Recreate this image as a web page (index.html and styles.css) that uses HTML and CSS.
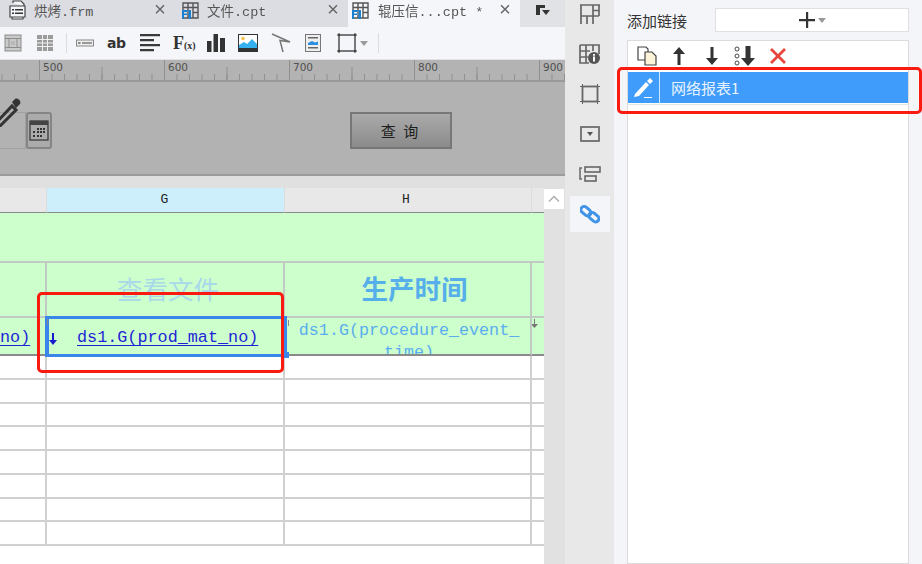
FILE: index.html

```html
<!DOCTYPE html>
<html lang="zh-CN">

<head>
    <meta charset="UTF-8">
    <title>报表设计器</title>
    <link rel="stylesheet" href="styles.css">
</head>

<body>
    <div class="app">
        <!-- Designer -->
        <main class="designer">
            <div class="tabs">
                <div class="tab tab-first">
                    <svg class="tab-icon" width="20" height="20" viewBox="0 0 20 20"><path d="M5 3V1h8l3 3v2M2 6h15v11H2zM4 17v2h11v-2" fill="#f5f6f9" stroke="#444" stroke-width="1.2"/><path d="M4 9h2v1.5H4zM7 9h8v1.5H7zM4 12.500h2V14H4zM7 12.500h8V14H7z" fill="#333"/></svg>
                    <span class="tab-name">烘烤.frm</span>
                    <span class="tab-close">×</span>
                </div>
                <div class="tab tab-second">
                    <svg class="tab-icon" width="17" height="17" viewBox="0 0 17 17"><path d="M1 1h15v15H1zM1 5.500h15M6 1v15M11 1v15M11 10.500h5" fill="none" stroke="#555" stroke-width="1.400"/><path d="M0 8h5.500v2H2v1.500h3V13H2v4H0zM6.500 8H9v9H6.500z" fill="#1b7fd0"/></svg>
                    <span class="tab-name">文件.cpt</span>
                    <span class="tab-close">×</span>
                </div>
                <div class="tab tab-active">
                    <svg class="tab-icon" width="17" height="17" viewBox="0 0 17 17"><path d="M1 1h15v15H1zM1 5.500h15M6 1v15M11 1v15M11 10.500h5" fill="none" stroke="#555" stroke-width="1.400"/><path d="M0 8h5.500v2H2v1.500h3V13H2v4H0zM6.500 8H9v9H6.500z" fill="#1b7fd0"/></svg>
                    <span class="tab-name">辊压信...cpt *</span>
                    <span class="tab-close">×</span>
                </div>
                <div class="tab-menu">
                    <svg width="16" height="14" viewBox="0 0 16 14"><path d="M1 1h9v3H5v7H1z" fill="#333"/><path d="M7 6h8l-4 5z" fill="#333"/></svg>
                </div>
            </div>

            <div class="toolbar">
                <svg class="tool tool-wide" width="18" height="18" viewBox="0 0 18 18"><rect x="1" y="1" width="16" height="16" fill="#c9c9c9" stroke="#8c8c8c"/><path d="M1 4.500h16M1 13.500h16M5 4.500v9M13 4.500v9" stroke="#8c8c8c" fill="none"/><rect x="7" y="7" width="4" height="4" fill="#b8b8b8"/></svg>
                <svg class="tool" width="18" height="18" viewBox="0 0 18 18"><rect x="1" y="1" width="16" height="16" fill="#9b9b9b"/><path d="M1 5.500h16M1 9h16M1 12.500h16M6.500 1v16M11.500 1v16" stroke="#f0f0f0" fill="none"/></svg>
                <span class="tool-sep"></span>
                <svg class="tool" width="18" height="18" viewBox="0 0 18 18"><rect x="0.500" y="6" width="17" height="6" fill="#eee" stroke="#888"/><rect x="2" y="8" width="2.500" height="2" fill="#888"/><rect x="6" y="8" width="10" height="2" fill="#999"/></svg>
                <span class="tool tool-text">ab</span>
                <svg class="tool" width="20" height="18" viewBox="0 0 20 18"><path d="M0 0h20v2.200H0zM0 5h14v2.200H0zM0 10h20v2.200H0zM0 15h14v2.200H0z" fill="#3a3a3a"/></svg>
                <span class="tool tool-fx">F<small>(x)</small></span>
                <svg class="tool" width="18" height="18" viewBox="0 0 18 18"><path d="M0 7h4.500v11H0zM6.500 0H11v18H6.500zM13 4h5v14h-5z" fill="#333"/></svg>
                <svg class="tool" width="20" height="18" viewBox="0 0 20 18"><rect x="0.500" y="0.500" width="19" height="17" fill="#fff" stroke="#333"/><path d="M1 14v-3l5-3 3 2 5-5 5 5v4z" fill="#35b0ee"/><circle cx="5" cy="4.500" r="1.800" fill="#f4c04a"/><rect x="1" y="14" width="18" height="3.500" fill="#333"/></svg>
                <svg class="tool tool-wide" width="20" height="20" viewBox="0 0 20 20"><path d="M1 1l18 8-10-1.500L12 19" fill="none" stroke="#777" stroke-width="1.500"/></svg>
                <svg class="tool tool-last" width="16" height="18" viewBox="0 0 16 18"><rect x="0.500" y="0.500" width="15" height="17" fill="#eee" stroke="#777"/><path d="M3 3h10v1.500H3zM3 13h10v1.500H3z" fill="#666"/><path d="M3 11V9l4-2 3 1.500 3-1V11z" fill="#2a8fe0"/></svg>
                <span class="tool tool-border">
                    <svg width="20" height="20" viewBox="0 0 20 20"><rect x="2" y="2" width="16" height="16" fill="none" stroke="#444" stroke-width="1.400"/><path d="M0 2h3M17 2h3M0 18h3M17 18h3M2 0v3M18 0v3M2 17v3M18 17v3" stroke="#333"/></svg>
                    <i class="caret"></i>
                </span>
                <span class="tool-sep"></span>
            </div>

            <div class="ruler">
                <span class="ruler-mark">500</span>
                <span class="ruler-mark">600</span>
                <span class="ruler-mark">700</span>
                <span class="ruler-mark">800</span>
                <span class="ruler-mark">900</span>
            </div>

            <div class="form-area">
                <div class="date-field">
                    <div class="date-input">
                        <svg class="date-pencil" width="24" height="30" viewBox="0 0 24 30"><path d="M-2 27L15 9l4 4L2 30z" fill="none" stroke="#333" stroke-width="3"/><path d="M15 5l3-3c2-1 4 0 5 2s0 3-1 4l-3 3z" fill="#333"/></svg>
                    </div>
                    <div class="date-button">
                        <svg width="20" height="21" viewBox="0 0 20 21"><rect x="1" y="1" width="18" height="19" fill="none" stroke="#333" stroke-width="1.200"/><path d="M1 1h18v4H1z" fill="#444"/><path d="M8 8h2v2H8zM11 8h2v2h-2zM14 8h2v2h-2zM4 11h2v2H4zM8 11h2v2H8zM11 11h2v2h-2zM14 11h2v2h-2zM4 15h2v2H4zM8 15h2v2H8zM11 15h2v2h-2z" fill="#333"/></svg>
                    </div>
                </div>
                <div class="query-button">查 询</div>
            </div>

            <div class="sheet">
                <div class="grid">
                    <div class="col-head"></div>
                    <div class="col-head col-active">G</div>
                    <div class="col-head col-h">H</div>
                    <div class="col-head col-end"></div>

                    <div class="band"></div>

                    <div class="cell green"></div>
                    <div class="cell green title title-faded">查看文件</div>
                    <div class="cell green title">生产时间</div>
                    <div class="cell green"></div>

                    <div class="cell green data link end-text">no)</div>
                    <div class="cell green data link"><span class="link-text">ds1.G(prod_mat_no)</span></div>
                    <div class="cell green data formula">ds1.G(procedure_event_ time)</div>
                    <div class="cell green data">
                        <svg class="drop-mark" width="7" height="9" viewBox="0 0 7 9"><path d="M3 0h1v5h3L3.500 9 0 5h3z" fill="#777"/></svg>
                    </div>

                    <div class="cell"></div><div class="cell"></div><div class="cell"></div><div class="cell"></div>
                    <div class="cell"></div><div class="cell"></div><div class="cell"></div><div class="cell"></div>
                    <div class="cell"></div><div class="cell"></div><div class="cell"></div><div class="cell"></div>
                    <div class="cell"></div><div class="cell"></div><div class="cell"></div><div class="cell"></div>
                    <div class="cell"></div><div class="cell"></div><div class="cell"></div><div class="cell"></div>
                    <div class="cell"></div><div class="cell"></div><div class="cell"></div><div class="cell"></div>
                    <div class="cell"></div><div class="cell"></div><div class="cell"></div><div class="cell"></div>
                    <div class="cell"></div><div class="cell"></div><div class="cell"></div><div class="cell"></div>
                </div>

                <div class="scrollbar">
                    <div class="scroll-up">
                        <svg width="12" height="8" viewBox="0 0 12 8"><path d="M1 6.500l5-5 5 5" fill="none" stroke="#aaa" stroke-width="1.300"/></svg>
                    </div>
                </div>

                <!-- selected cell -->
                <div class="cell-selection">
                    <i class="selection-tick"></i>
                    <i class="selection-tick selection-tick-right"></i>
                    <span class="selection-arrow">
                        <svg width="8" height="12" viewBox="0 0 8 12"><path d="M3 0h2v7h3l-4 5-4-5h3z" fill="#1a1ad0"/></svg>
                    </span>
                    <i class="selection-handle"></i>
                </div>
                <div class="callout callout-cell"></div>
            </div>
        </main>

        <!-- Property icons -->
        <aside class="strip">
            <div class="strip-item">
                <svg width="20" height="20" viewBox="0 0 20 20"><path d="M0 1h20M1 1v19M1 12h18M7 12v8M13 1v19M13 6.500h6M19 1v11" fill="none" stroke="#666" stroke-width="1.700"/></svg>
            </div>
            <div class="strip-item">
                <svg width="21" height="20" viewBox="0 0 21 20"><path d="M1 1h19v9M1 1v18h9M1 7h10M1 13h8M7 1v18M14 1v6" fill="none" stroke="#666" stroke-width="1.700"/><circle cx="15" cy="14" r="6" fill="#555"/><rect x="14" y="12.500" width="2" height="5" fill="#fff"/><rect x="14" y="10" width="2" height="1.700" fill="#fff"/></svg>
            </div>
            <div class="strip-item">
                <svg width="20" height="20" viewBox="0 0 20 20"><rect x="2.500" y="2.500" width="15" height="15" fill="none" stroke="#666" stroke-width="1.800"/><path d="M0 2.500h5M15 2.500h5M0 17.500h5M15 17.500h5M2.500 0v5M17.500 0v5M2.500 15v5M17.500 15v5" stroke="#666"/></svg>
            </div>
            <div class="strip-item">
                <svg width="20" height="16" viewBox="0 0 20 16"><rect x="1" y="1" width="18" height="14" fill="none" stroke="#666" stroke-width="1.700"/><path d="M7 6h6l-3 4z" fill="#555"/></svg>
            </div>
            <div class="strip-item">
                <svg width="22" height="16" viewBox="0 0 22 16"><path d="M3 2H1v11h2" fill="none" stroke="#666" stroke-width="1.500"/><rect x="6" y="1" width="15" height="5" fill="none" stroke="#666" stroke-width="1.600"/><rect x="6" y="10" width="11" height="5" fill="none" stroke="#666" stroke-width="1.600"/></svg>
            </div>
            <div class="strip-item strip-active">
                <svg width="20" height="20" viewBox="0 0 20 20"><g fill="none" stroke="#3f94e8" stroke-width="3"><rect x="0.500" y="4" width="11" height="6.500" rx="3.200" transform="rotate(40 6 7)"/><rect x="8.500" y="10" width="11" height="6.500" rx="3.200" transform="rotate(40 14 13)"/></g></svg>
            </div>
        </aside>

        <!-- Hyperlink panel -->
        <section class="panel">
            <div class="panel-head">
                <span class="panel-label">添加链接</span>
                <div class="add-button">
                    <svg width="18" height="18" viewBox="0 0 18 18"><path d="M8 1h2.200v7H17v2.200h-6.800V17H8v-6.800H1V8h7z" fill="#333"/></svg>
                    <i class="caret"></i>
                </div>
            </div>
            <div class="link-box">
                <div class="link-tools">
                    <svg width="20" height="20" viewBox="0 0 20 20"><path d="M1 1h8l2 2v11H1z" fill="#fff" stroke="#444" stroke-width="1.200"/><path d="M8 6h7l4 4v9H8z" fill="#fdf3d8" stroke="#444" stroke-width="1.200"/></svg>
                    <svg width="14" height="18" viewBox="0 0 14 18"><path d="M7 0l6 7H8.500v11h-3V7H1z" fill="#333"/></svg>
                    <svg class="tool-down" width="14" height="18" viewBox="0 0 14 18"><path d="M7 18l6-7H8.500V0h-3v11H1z" fill="#333"/></svg>
                    <svg width="22" height="20" viewBox="0 0 22 20"><circle cx="3" cy="3" r="2" fill="none" stroke="#444"/><circle cx="3" cy="10" r="2" fill="none" stroke="#444"/><circle cx="3" cy="17" r="2" fill="none" stroke="#444"/><path d="M14 20l7-8h-4.500V0h-5v12H7z" fill="#333"/></svg>
                    <svg class="tool-remove" width="18" height="18" viewBox="0 0 18 18"><path d="M2 2l14 14M16 2L2 16" stroke="#e8453c" stroke-width="2.800"/></svg>
                </div>
                <div class="link-row">
                    <span class="link-row-icon">
                        <svg width="20" height="20" viewBox="0 0 20 20"><path d="M1 16L12 4l3 3L5 18l-5 1zM13 3l3-3 3 3-3 3z" fill="#fff"/><path d="M10 19h8v1h-8z" fill="#fff"/></svg>
                    </span>
                    <span class="link-row-name">网络报表1</span>
                </div>
                <div class="link-row-line"></div>
            </div>
            <div class="callout callout-row"></div>
        </section>
    </div>
</body>

</html>
```

FILE: styles.css

```css
/* General styles */
* {
    margin: 0;
    padding: 0;
    box-sizing: border-box;
}

html,
body {
    height: 100%;
    overflow: hidden;
}

body {
    font-family: 'Liberation Mono', 'Noto Sans CJK SC', monospace;
    background-color: #f4f5f8;
    color: #333;
}

.app {
    display: flex;
    position: relative;
    width: 922px;
    height: 564px;
    filter: blur(0.35px);
}

.designer {
    width: 565px;
    display: flex;
    flex-direction: column;
}

/* Tabs */
.tabs {
    display: flex;
    height: 27px;
    background-color: #dcdde2;
}

.tab {
    display: flex;
    align-items: center;
    padding-bottom: 7px;
    font-size: 13.500px;
    color: #555;
    position: relative;
}

.tab-first {
    width: 175px;
    padding-left: 8px;
    gap: 6px;
}

.tab-second {
    width: 173px;
    padding-left: 7px;
    gap: 8px;
}

.tab-active {
    width: 172px;
    padding-left: 4px;
    gap: 9px;
    background-color: #f5f6f9;
}

.tab-close {
    position: absolute;
    top: 0;
    right: 9px;
    font-size: 20px;
    line-height: 21px;
    color: #666;
}

.tab-menu {
    flex: 1;
    padding: 4px 0 0 15px;
    background-color: #e1e2e6;
}

/* Toolbar */
.toolbar {
    display: flex;
    align-items: center;
    height: 33px;
    padding-left: 4px;
    background-color: #f5f6f9;
    border-bottom: 1px solid #e2e2e2;
}

.tool {
    flex: none;
    margin-right: 13px;
}

.tool-wide {
    margin-right: 14px;
}

.tool-last {
    margin-right: 16px;
}

.tool-sep {
    flex: none;
    width: 1px;
    height: 20px;
    margin: 0 9px 0 -1px;
    background-color: #dcdcdc;
}

.tool-text {
    width: 18px;
    margin-right: 15px;
    font-family: 'DejaVu Sans', sans-serif;
    font-size: 14px;
    font-weight: bold;
    text-align: center;
    letter-spacing: -0.5px;
}

.tool-fx {
    width: 21px;
    font-family: 'Liberation Serif', serif;
    font-size: 18px;
    font-weight: bold;
    white-space: nowrap;
}

.tool-fx small {
    font-size: 10px;
}

.tool-border {
    display: flex;
    align-items: center;
    gap: 3px;
    margin-right: 11px;
}

.caret {
    display: inline-block;
    border-left: 4px solid transparent;
    border-right: 4px solid transparent;
    border-top: 5px solid #999;
}

/* Ruler */
.ruler {
    display: flex;
    height: 22px;
    padding-left: 39px;
    overflow: hidden;
    background-color: #b3b3b3;
    background-image:
        linear-gradient(to right, #8f8f8f 1px, transparent 1px),
        linear-gradient(to right, #8f8f8f 1px, transparent 1px);
    background-repeat: repeat-x;
    background-size: 12.5px 6px, 62.5px 13px;
    background-position: 1.5px 14px, 39px 7px;
    border-bottom: 2px solid #999;
}

.ruler-mark {
    flex: none;
    width: 125px;
    padding: 1px 0 0 3px;
    font-family: 'DejaVu Sans', sans-serif;
    font-size: 10.500px;
    color: #505050;
    border-left: 1px solid #8f8f8f;
}

/* Parameter form preview */
.form-area {
    display: flex;
    align-items: flex-start;
    justify-content: space-between;
    height: 94px;
    padding: 30px 113px 0 0;
    background-color: #b2b2b2;
    border-bottom: 2px solid #9b9b9b;
}

.date-field {
    display: flex;
}

.date-input {
    width: 26px;
    height: 37px;
    position: relative;
    border: 1px solid #a0a0a0;
    border-left: none;
}

.date-pencil {
    position: absolute;
    left: -3px;
    top: -16px;
}

.date-button {
    display: flex;
    align-items: center;
    justify-content: center;
    width: 26px;
    height: 37px;
    border: 2px solid #858585;
    border-radius: 3px;
    background-color: #ababab;
}

.query-button {
    width: 102px;
    height: 37px;
    padding-right: 3px;
    line-height: 33px;
    text-align: center;
    word-spacing: 4px;
    font-family: 'Noto Sans CJK SC', sans-serif;
    font-size: 15px;
    color: #1d1d1d;
    border: 2px solid #777;
    background: linear-gradient(#aaa, #8b8b8b);
}

/* Sheet */
.sheet {
    flex: 1;
    display: flex;
    padding-top: 12px;
    position: relative;
    min-height: 0;
    background-color: #e0e0e0;
}

.grid {
    width: 544px;
    display: grid;
    grid-template-columns: 47px 238px 247px 12px;
    grid-template-rows: 25px 50px 55px 38px repeat(8, 23.750px);
    background-color: #fff;
    overflow: hidden;
}

.col-head {
    text-align: center;
    line-height: 24px;
    font-size: 13px;
    color: #222;
    background-color: #e8e8e8;
    border-right: 1px solid #dcdcdc;
    border-bottom: 1px solid #8a8a8a;
}

.col-active {
    padding-right: 2px;
    background-color: #cdeefb;
}

.col-h {
    padding-right: 4px;
}

.col-end {
    border-right: none;
}

.band {
    grid-column: 1 / -1;
    background-color: #ccffcc;
    border-bottom: 2px solid #c2c8c2;
}

.cell {
    min-width: 0;
    overflow: hidden;
    background-color: #fff;
    border-right: 2px solid #d0d0d0;
    border-bottom: 2px solid #d0d0d0;
}

.cell:nth-child(4n + 1) {
    border-right: none;
}

.green {
    background-color: #ccffcc;
    border-color: #c2c8c2;
}

.title {
    display: flex;
    align-items: flex-start;
    justify-content: center;
    padding: 7px 0 0 14px;
    font-family: 'Noto Sans CJK SC', sans-serif;
    font-size: 26.500px;
    line-height: 36px;
    font-weight: bold;
    color: #56aeea;
}

.title-faded {
    padding-left: 6px;
    font-size: 25.500px;
    font-weight: normal;
    color: #a8d8ea;
}

.data {
    font-size: 16.800px;
    line-height: 19px;
    border-bottom-color: #8a8a8a;
}

.link {
    color: #1f1fd6;
    text-decoration: underline;
    text-underline-offset: 3px;
    padding-top: 10px;
}

.end-text {
    text-align: right;
    padding-right: 20px;
    white-space: nowrap;
}

.link-text {
    margin-left: 30px;
}

.formula {
    padding: 2px 10px 0 13px;
    color: #5aaeee;
    text-align: center;
    font-size: 16.700px;
    line-height: 22px;
    word-break: break-all;
}

.drop-mark {
    display: block;
    margin: 1px 0 0 -1px;
}

/* Scrollbar */
.scrollbar {
    flex: 1;
    padding-top: 1px;
    background-color: #e1e1e1;
}

.scroll-up {
    display: flex;
    align-items: center;
    justify-content: center;
    width: 20px;
    height: 20px;
    background-color: #fff;
}

/* Selected cell and red callouts lie over the sheet */
.cell-selection {
    position: absolute;
    left: 45px;
    top: 140px;
    width: 242px;
    height: 41px;
    border: 3px solid #3a85ea;
    border-left-width: 4px;
}

.selection-tick {
    position: absolute;
    left: -2px;
    top: 0;
    width: 1px;
    height: 6px;
    background-color: #888;
}

.selection-tick-right {
    left: auto;
    right: -5px;
    top: 1px;
}

.selection-arrow {
    position: absolute;
    left: 0;
    top: 14px;
    display: flex;
}

.selection-handle {
    position: absolute;
    right: -5px;
    bottom: -4px;
    width: 6px;
    height: 6px;
    background-color: #3a85ea;
}

.callout {
    position: absolute;
    border: 3px solid #fb1a10;
    border-radius: 5px;
    pointer-events: none;
}

.callout-cell {
    left: 37px;
    top: 116px;
    width: 247px;
    height: 81px;
}

.callout-row {
    left: 3px;
    top: 67px;
    width: 305px;
    height: 47px;
}

/* Side strip */
.strip {
    width: 49px;
    display: flex;
    flex-direction: column;
    align-items: center;
    background-color: #e8e8e8;
}

.strip-item {
    display: flex;
    align-items: center;
    justify-content: center;
    flex: none;
    width: 40px;
    height: 36px;
    margin-bottom: 4px;
}

.strip-item:first-child {
    margin-top: -4px;
}

.strip-active {
    background-color: #f4f5f8;
}

/* Panel */
.panel {
    flex: 1;
    position: relative;
    display: flex;
    flex-direction: column;
    padding: 8px 13px 0;
    background-color: #f4f5f8;
}

.panel-head {
    display: flex;
    align-items: center;
    justify-content: space-between;
    height: 24px;
    margin-bottom: 8px;
}

.panel-label {
    font-family: 'Noto Sans CJK SC', sans-serif;
    font-size: 15px;
    color: #333;
}

.add-button {
    display: flex;
    align-items: center;
    justify-content: center;
    gap: 2px;
    width: 194px;
    height: 24px;
    background-color: #fff;
    border: 1px solid #e0e0e0;
}

.link-box {
    flex: 1;
    background-color: #fff;
    border: 1px solid #dcdcdc;
}

.link-tools {
    display: flex;
    align-items: center;
    gap: 15px;
    height: 31px;
    padding: 0 0 2px 9px;
}

.tool-down {
    margin: 0 0 0 4px;
}

.tool-remove {
    margin-left: -2px;
}

.link-row {
    display: flex;
    height: 31px;
    background-color: #409cfb;
    color: #fff;
}

.link-row-icon {
    display: flex;
    align-items: center;
    justify-content: center;
    width: 32px;
    border-right: 1px solid #cfe5fd;
}

.link-row-name {
    padding-left: 11px;
    font-family: 'Noto Sans CJK SC', sans-serif;
    font-size: 15px;
    line-height: 32px;
    color: #e9f3ff;
}

.link-row-line {
    height: 1px;
    margin-top: 1px;
    background-color: #e4e4e4;
}
```
